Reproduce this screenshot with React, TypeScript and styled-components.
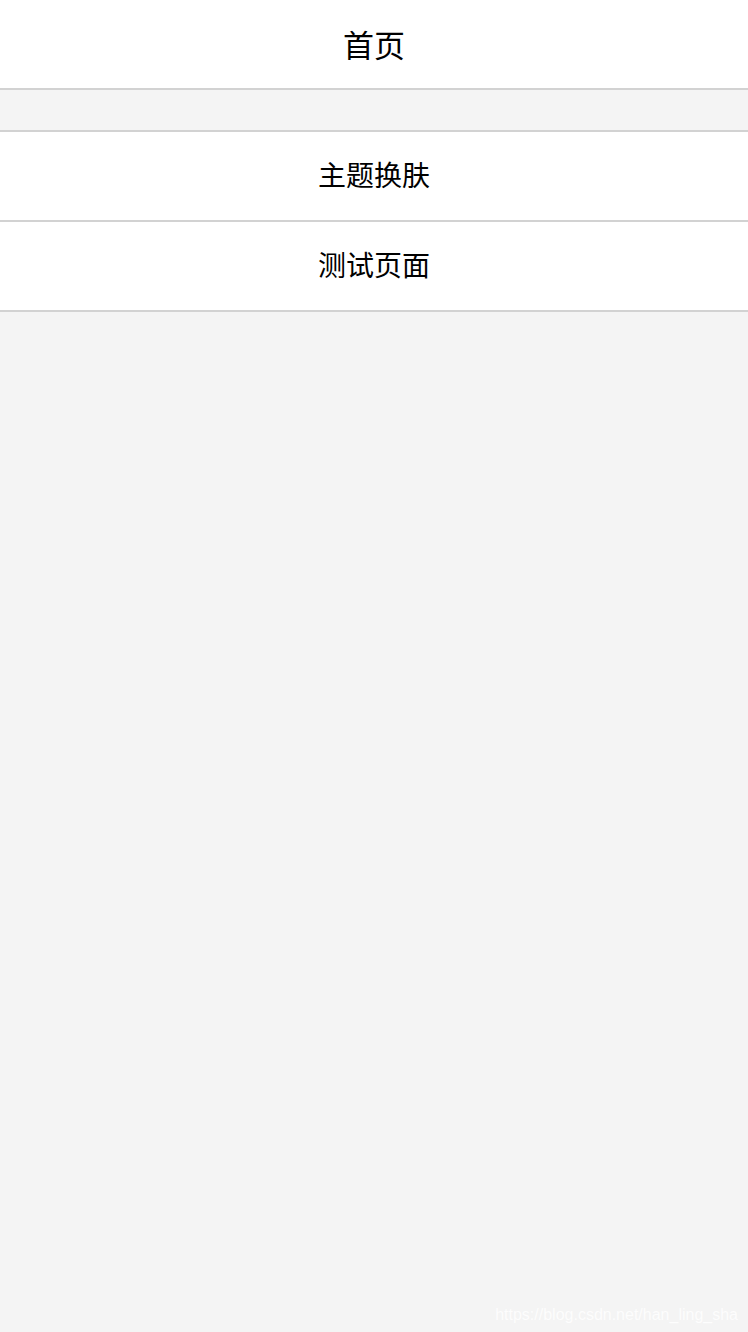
import React from "react";
import styled, { createGlobalStyle } from "styled-components";

const GlobalStyle = createGlobalStyle`
  html, body {
    margin: 0;
    padding: 0;
    background: #f4f4f4;
  }
  body {
    font-family: "Noto Sans CJK SC", "Noto Sans", sans-serif;
  }
`;

const items = ["主题换肤", "测试页面"];

function App() {
  return (
    <Page>
      <GlobalStyle />
      <Header>
        <Title>首页</Title>
      </Header>
      <Menu>
        {items.map((item) => (
          <MenuItem key={item}>
            <Label>{item}</Label>
          </MenuItem>
        ))}
      </Menu>
      <Watermark>https://blog.csdn.net/han_ling_sha</Watermark>
    </Page>
  );
}

export default App;

const Page = styled.div`
  position: relative;
  width: 748px;
  height: 1332px;
  background: #f4f4f4;
  overflow: hidden;
`;

const Header = styled.div`
  height: 88px;
  display: flex;
  align-items: center;
  justify-content: center;
  background: #ffffff;
  border-bottom: 2px solid #d2d2d2;
`;

const Title = styled.div`
  font-size: 31px;
  color: #000;
  line-height: 1;
  margin-bottom: 2px;
`;

const Menu = styled.div`
  margin-top: 40px;
  background: #ffffff;
  border-top: 2px solid #d2d2d2;
`;

const MenuItem = styled.div`
  height: 88px;
  display: flex;
  align-items: center;
  justify-content: center;
  border-bottom: 2px solid #d2d2d2;
`;

const Label = styled.span`
  font-size: 28px;
  line-height: 1;
  color: #000;
  margin-bottom: 4px;
`;

const Watermark = styled.div`
  position: absolute;
  right: 10px;
  bottom: 8px;
  font-family: "Liberation Sans", Arial, sans-serif;
  font-size: 16px;
  color: #ffffff;
  opacity: 0.85;
`;
